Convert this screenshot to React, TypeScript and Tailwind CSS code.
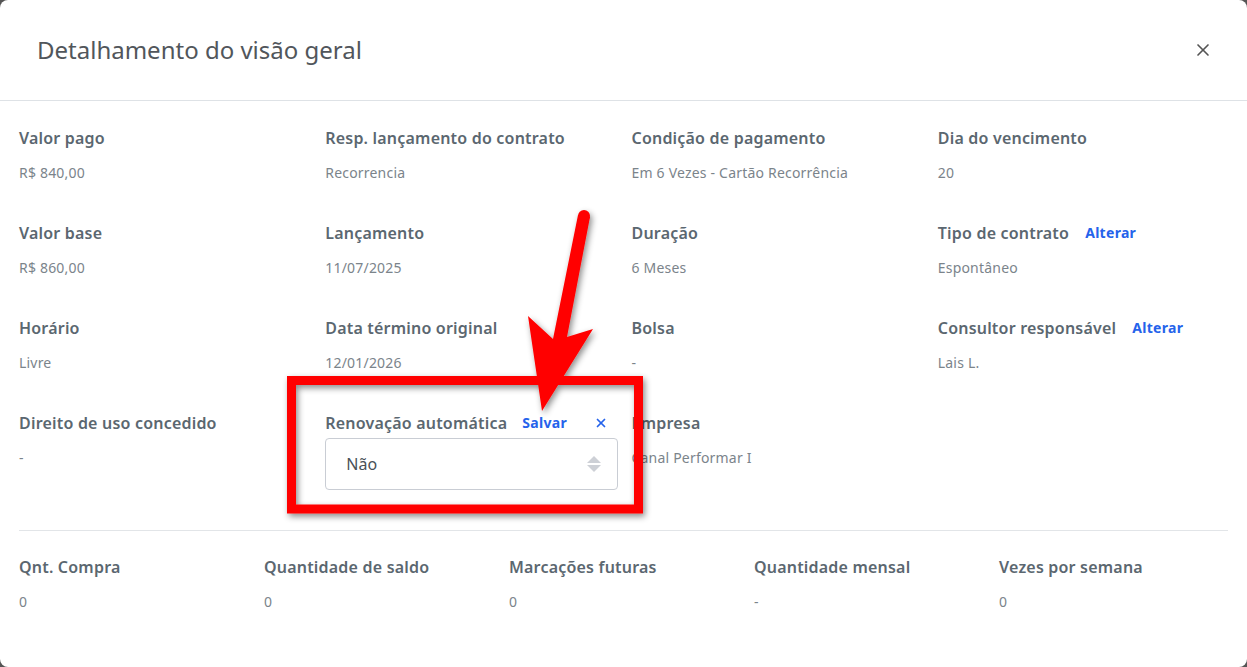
import { X } from 'lucide-react'

const font = { fontFamily: '"Noto Sans", Lato, sans-serif' }

type Field = { label: string; value?: string; action?: string }

const rows: Field[] = [
  { label: 'Valor pago', value: 'R$ 840,00' },
  { label: 'Resp. lançamento do contrato', value: 'Recorrencia' },
  { label: 'Condição de pagamento', value: 'Em 6 Vezes - Cartão Recorrência' },
  { label: 'Dia do vencimento', value: '20' },
  { label: 'Valor base', value: 'R$ 860,00' },
  { label: 'Lançamento', value: '11/07/2025' },
  { label: 'Duração', value: '6 Meses' },
  { label: 'Tipo de contrato', value: 'Espontâneo', action: 'Alterar' },
  { label: 'Horário', value: 'Livre' },
  { label: 'Data término original', value: '12/01/2026' },
  { label: 'Bolsa', value: '-' },
  { label: 'Consultor responsável', value: 'Lais L.', action: 'Alterar' },
]

const totals: Field[] = [
  { label: 'Qnt. Compra', value: '0' },
  { label: 'Quantidade de saldo', value: '0' },
  { label: 'Marcações futuras', value: '0' },
  { label: 'Quantidade mensal', value: '-' },
  { label: 'Vezes por semana', value: '0' },
]

function Item({ f }: { f: Field }) {
  return (
    <div className="flex flex-col gap-[15px]">
      <div className="flex items-center h-5">
        <span className="text-[16px] font-semibold text-[#5b6770] leading-5 tracking-[0.2px]">{f.label}</span>
        {f.action && (
          <span className="ml-4 text-[14px] font-bold text-[#2563eb] leading-5 tracking-[0.3px]">{f.action}</span>
        )}
      </div>
      <span className="text-[14px] text-[#7b848b] leading-5 tracking-[0.2px]">{f.value}</span>
    </div>
  )
}

export default function App() {
  return (
    <div className="relative h-[667px] w-full bg-[#555] overflow-hidden" style={font}>
      <div className="h-full bg-white rounded-lg flex flex-col">

        {/* Header */}
        <div className="h-[101px] flex items-center justify-between pl-[37px] pr-[34px] border-b border-[#dee2e6] shrink-0">
          <h1 className="text-[24px] text-[#51565b] leading-8">Detalhamento do visão geral</h1>
          <X size={20} strokeWidth={2} className="text-[#555]" />
        </div>

        {/* Body */}
        <div className="px-[19px]">
          <div className="w-[1225px] grid grid-cols-4 gap-y-10 pt-[27px] pb-10">
            {rows.map((f) => (
              <Item key={f.label} f={f} />
            ))}
            <Item f={{ label: 'Direito de uso concedido', value: '-' }} />
            <div className="flex flex-col gap-[5px] pr-[14px]">
              <div className="flex items-center h-5">
                <span className="text-[16px] font-semibold text-[#5b6770] leading-5 tracking-[0.2px]">Renovação automática</span>
                <span className="ml-[15px] text-[14px] font-bold text-[#2563eb] leading-5 tracking-[0.3px]">Salvar</span>
                <X size={14} strokeWidth={3} className="ml-auto mr-[10px] text-[#2563eb]" />
              </div>
              <div className="h-[52px] border border-[#c9cdd4] rounded flex items-center justify-between pl-5 pr-[15px]">
                <span className="text-[16px] text-[#495057]">Não</span>
                <svg width="16" height="20" viewBox="0 0 16 20">
                  <path d="M8 2 L15 9 H1 Z" fill="#cdd0d6" />
                  <path d="M8 18 L15 11 H1 Z" fill="#cdd0d6" />
                </svg>
              </div>
            </div>
            <Item f={{ label: 'Empresa', value: 'Canal Performar I' }} />
          </div>
          <div className="h-px bg-[#e2e5e8]" />
          <div className="w-[1225px] grid grid-cols-5 pt-[26px]">
            {totals.map((f) => (
              <Item key={f.label} f={f} />
            ))}
          </div>
        </div>
      </div>

      {/* Annotation */}
      <svg className="absolute inset-0 pointer-events-none" width="1247" height="667">
        <defs>
          <filter id="sh" x="-20%" y="-20%" width="140%" height="140%">
            <feDropShadow dx="2" dy="3" stdDeviation="3" floodColor="#000" floodOpacity="0.45" />
          </filter>
        </defs>
        <g filter="url(#sh)">
          <rect x="291.5" y="380.5" width="347" height="128.5" fill="none" stroke="#ff0000" strokeWidth="9" />
          <circle cx="584" cy="216" r="6" fill="#ff0000" />
          <polygon points="578,215 590,217 567,337 593,329 542,411 528,316 553,339" fill="#ff0000" />
        </g>
      </svg>
    </div>
  )
}
